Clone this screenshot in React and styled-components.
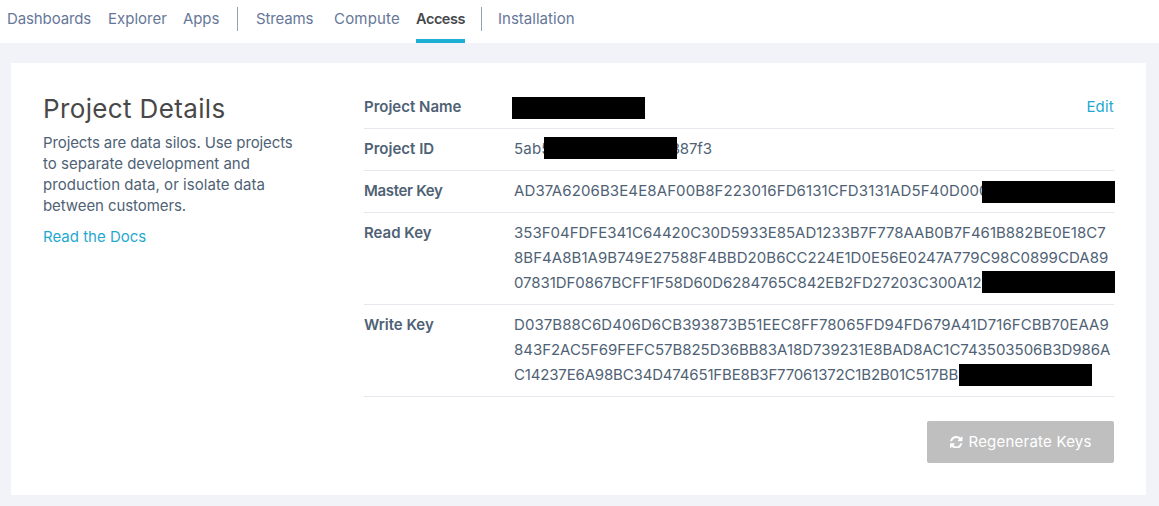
import React from "react";
import styled, { createGlobalStyle } from "styled-components";

const GlobalStyle = createGlobalStyle`
  *, *::before, *::after { box-sizing: border-box; }
  body {
    margin: 0;
    background: #f2f3f8;
    color: #4f6275;
    font: 400 15px/21px Inter, "Liberation Sans", sans-serif;
  }
`;

const Page = styled.div`
  height: 506px;
  overflow: hidden;
`;

const Nav = styled.nav`
  display: flex;
  align-items: flex-start;
  height: 43px;
  padding-left: 7px;
  background: #fff;
`;

const NavItem = styled.a`
  flex: none;
  width: ${(p) => p.$width}px;
  height: 43px;
  margin-right: ${(p) => p.$gap}px;
  padding-top: 8px;
  color: ${(p) => (p.$active ? "#44474b" : "#667799")};
  font-size: ${(p) => (p.$active ? 14.5 : 15)}px;
  font-weight: ${(p) => (p.$active ? 600 : 400)};
  letter-spacing: ${(p) => p.$tracking}px;
  white-space: nowrap;
  border-bottom: ${(p) => (p.$active ? "4px solid #1caed3" : "0")};
`;

const NavDivider = styled.span`
  flex: none;
  width: 1px;
  height: 24px;
  margin: 7px ${(p) => p.$gap}px 0 0;
  background: #94a1b8;
`;

const Card = styled.main`
  display: flex;
  width: 1135px;
  height: 432px;
  margin: 20px 0 0 11px;
  padding: 24px 32px 32px;
  background: #fff;
`;

const Intro = styled.section`
  width: 321px;
  flex: none;
  padding-top: 7px;
`;

const Title = styled.h1`
  margin: 0 0 8px;
  color: #484848;
  font-size: 26px;
  line-height: 30px;
  font-weight: 400;
  letter-spacing: 0.36px;
`;

const IntroLine = styled.span`
  display: block;
  white-space: nowrap;
  letter-spacing: ${(p) => p.$tracking}px;
`;

const Description = styled.p`
  margin: 0 0 10px;
`;

const Link = styled.a`
  color: #1fa9cf;
`;

const Details = styled.section`
  display: flex;
  flex-direction: column;
  width: 750px;
`;

const Row = styled.div`
  display: flex;
  padding: 7px 0 9px;
  line-height: 25px;
  border-bottom: 1px solid #e6e8ee;
`;

const Label = styled.div`
  flex: none;
  width: 150px;
  font-weight: 600;
  letter-spacing: ${(p) => p.$tracking}px;
`;

const Value = styled.div`
  position: relative;
  display: flex;
  flex-direction: column;
  flex: 1;
  min-height: 25px;
`;

const KeyLine = styled.span`
  height: 25px;
  white-space: nowrap;
  letter-spacing: ${(p) => p.$tracking}px;
`;

const SplitId = styled.span`
  display: flex;
  justify-content: space-between;
  width: 198px;
`;

const Redaction = styled.span`
  position: absolute;
  left: ${(p) => p.$left}px;
  top: ${(p) => p.$top}px;
  width: 133px;
  height: 22px;
  background: #000;
`;

const EditLink = styled(Link)`
  flex: none;
  letter-spacing: 0.22px;
`;

const RegenerateButton = styled.button`
  display: flex;
  align-items: center;
  align-self: flex-end;
  gap: 6px;
  width: 187px;
  height: 42px;
  margin-top: 24px;
  padding: 0 0 1px 23px;
  border: 0;
  border-radius: 2px;
  background: #bfbfbf;
  color: #fff;
  font: inherit;
  letter-spacing: 0.22px;
  white-space: nowrap;
`;

const RefreshGlyph = styled.svg`
  flex: none;
  width: 12.5px;
  height: 12.5px;
  margin-top: 1px;
  fill: currentColor;
`;

const RefreshIcon = () => (
  <RefreshGlyph viewBox="0 0 1536 1536" aria-hidden="true">
    <path d="M1511 928q0 5-1 7-64 268-268 434.5t-478 166.500q-146 0-282.500-55t-243.500-157l-129 129q-19 19-45 19t-45-19-19-45v-448q0-26 19-45t45-19h448q26 0 45 19t19 45-19 45l-137 137q71 66 161 102t187 36q134 0 250-65t186-179q11-17 53-117 8-23 30-23h192q13 0 22.500 9.500t9.500 22.500zm25-800v448q0 26-19 45t-45 19h-448q-26 0-45-19t-19-45 19-45l138-138q-148-137-349-137-134 0-250 65t-186 179q-11 17-53 117-8 23-30 23h-199q-13 0-22.500-9.500t-9.500-22.500v-7q65-268 270-434.500t480-166.500q146 0 284 55.500t245 156.500l130-129q19-19 45-19t45 19 19 45z" />
  </RefreshGlyph>
);

const keys = [
  {
    label: "Master Key",
    labelTracking: -0.32,
    lines: [["AD37A6206B3E4E8AF00B8F223016FD6131CFD3131AD5F40D000", 0.115]],
    redaction: [468, 3],
  },
  {
    label: "Read Key",
    labelTracking: -0.02,
    lines: [
      ["353F04FDFE341C64420C30D5933E85AD1233B7F778AAB0B7F461B882BE0E18C7", 0],
      ["8BF4A8B1A9B749E27588F4BBD20B6CC224E1D0E56E0247A779C98C0899CDA89", 0.046],
      ["07831DF0867BCFF1F58D60D6284765C842EB2FD27203C300A12", -0.07],
    ],
    redaction: [468, 51],
  },
  {
    label: "Write Key",
    labelTracking: -0.03,
    lines: [
      ["D037B88C6D406D6CB393873B51EEC8FF78065FD94FD679A41D716FCBB70EAA9", 0.075],
      ["843F2AC5F69FEFC57B825D36BB83A18D739231E8BAD8AC1C743503506B3D986A", -0.027],
      ["C14237E6A98BC34D474651FBE8B3F77061372C1B2B01C517BB", -0.165],
    ],
    redaction: [445, 52],
  },
];

export default function App() {
  return (
    <Page>
      <GlobalStyle />
      <Nav>
        <NavItem $width={84} $gap={17} $tracking={-0.118}>Dashboards</NavItem>
        <NavItem $width={59} $gap={16} $tracking={0}>Explorer</NavItem>
        <NavItem $width={37} $gap={17} $tracking={-0.1}>Apps</NavItem>
        <NavDivider $gap={18} />
        <NavItem $width={59} $gap={19} $tracking={-0.15}>Streams</NavItem>
        <NavItem $width={66} $gap={16} $tracking={0.18}>Compute</NavItem>
        <NavItem $width={49} $gap={16} $tracking={-0.45} $active>Access</NavItem>
        <NavDivider $gap={16} />
        <NavItem $width={78} $gap={0} $tracking={0.02}>Installation</NavItem>
      </Nav>
      <Card>
        <Intro>
          <Title>Project Details</Title>
          <Description>
            <IntroLine $tracking={-0.11}>Projects are data silos. Use projects</IntroLine>
            <IntroLine $tracking={0}>to separate development and</IntroLine>
            <IntroLine $tracking={0.044}>production data, or isolate data</IntroLine>
            <IntroLine $tracking={-0.08}>between customers.</IntroLine>
          </Description>
          <Link>Read the Docs</Link>
        </Intro>
        <Details>
          <Row>
            <Label $tracking={0}>Project Name</Label>
            <Value>
              <Redaction $left={-2} $top={3} />
            </Value>
            <EditLink>Edit</EditLink>
          </Row>
          <Row>
            <Label $tracking={0.02}>Project ID</Label>
            <Value>
              <SplitId>
                <KeyLine $tracking={0.2}>5ab5</KeyLine>
                <KeyLine $tracking={-0.1}>387f3</KeyLine>
              </SplitId>
              <Redaction $left={30} $top={1} />
            </Value>
          </Row>
          {keys.map(({ label, labelTracking, lines, redaction }) => (
            <Row key={label}>
              <Label $tracking={labelTracking}>{label}</Label>
              <Value>
                {lines.map(([text, tracking]) => (
                  <KeyLine key={text} $tracking={tracking}>{text}</KeyLine>
                ))}
                <Redaction $left={redaction[0]} $top={redaction[1]} />
              </Value>
            </Row>
          ))}
          <RegenerateButton>
            <RefreshIcon />
            Regenerate Keys
          </RegenerateButton>
        </Details>
      </Card>
    </Page>
  );
}
